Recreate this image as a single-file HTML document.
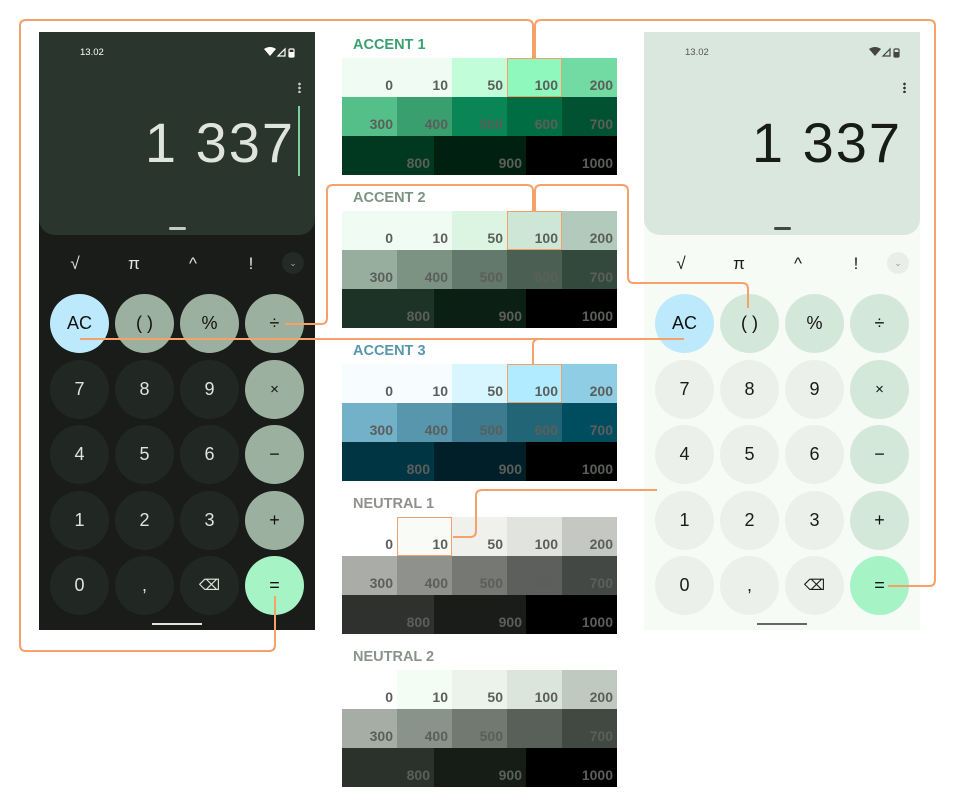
<!DOCTYPE html>
<html><head><meta charset="utf-8"><style>
*{margin:0;padding:0;box-sizing:border-box}
body{width:962px;height:810px;background:#fff;position:relative;overflow:hidden;font-family:"Liberation Sans",sans-serif}
.abs{position:absolute}
.ph{position:absolute;top:32px;width:276px;height:598px;overflow:hidden}
.top{position:absolute;left:0;top:0;width:276px;height:203px;border-radius:0 0 16px 16px}
.st{position:absolute;top:15px;left:41px;font-size:9.5px}
.num{position:absolute;right:18px;top:78px;font-size:56px;letter-spacing:2px;font-weight:300}
.fn{position:absolute;top:222px;font-size:17px;width:30px;text-align:center}
.b{position:absolute;width:59px;height:59px;border-radius:50%;text-align:center;line-height:59px;font-size:18px}
.lbl{position:absolute;left:353px;font-size:14.5px;font-weight:bold}
.g{position:absolute;left:342px;width:275px;height:117px}
.c{position:absolute;height:39px;text-align:right;padding-right:4px;padding-top:19px;font-size:14px;font-weight:bold;color:#5b5e5b}
.hl{outline:1.5px solid #f4a06a;outline-offset:-1.5px}
</style></head><body>

<!-- DARK PHONE -->
<div class="ph" style="left:39px;background:#191c19">
 <div class="top" style="background:#29352d">
  <div class="st" style="color:#fff">13.02</div>
  <svg class="abs" style="left:225px;top:15px" width="34" height="11"><path d="M0 2 Q6 -2 12 2 L6 9Z" fill="#fff"/><path d="M14 9 L21 2 L21 9Z" fill="none" stroke="#fff" stroke-width="1.2"/><rect x="25" y="2" width="5" height="8" rx="1" fill="none" stroke="#fff" stroke-width="1.2"/><rect x="25" y="5" width="5" height="5" fill="#fff"/></svg>
  <div class="abs" style="left:259px;top:50px;width:3px;height:11px;background:radial-gradient(circle,#ccc 1.2px,transparent 1.5px) 0 0/3px 4px"></div>
  <div class="num" style="color:#dfe4dd;right:20px">1 337</div>
  <div class="abs" style="left:259px;top:74px;width:1.5px;height:70px;background:#7dcf9c"></div>
  <div class="abs" style="left:130px;top:195px;width:17px;height:3px;border-radius:2px;background:#c4cbc4"></div>
 </div>
 <div class="fn" style="left:21px;color:#e0e3de">√</div>
 <div class="fn" style="left:80px;color:#e0e3de">π</div>
 <div class="fn" style="left:139px;color:#e0e3de">^</div>
 <div class="fn" style="left:197px;color:#e0e3de">!</div>
 <div class="abs" style="left:243px;top:220px;width:22px;height:22px;border-radius:50%;background:#242a25;color:#9aa;font-size:9px;text-align:center;line-height:22px">⌄</div>
 <div class="b" style="left:11px;top:262px;background:#bde9fc;color:#111">AC</div>
 <div class="b" style="left:76px;top:262px;background:#9cb0a0;color:#111">( )</div>
 <div class="b" style="left:141px;top:262px;background:#9cb0a0;color:#111">%</div>
 <div class="b" style="left:206px;top:262px;background:#9cb0a0;color:#111">÷</div>
 <div class="b" style="left:11px;top:328px;background:#212722;color:#e0e3de">7</div>
 <div class="b" style="left:76px;top:328px;background:#212722;color:#e0e3de">8</div>
 <div class="b" style="left:141px;top:328px;background:#212722;color:#e0e3de">9</div>
 <div class="b" style="left:206px;top:328px;background:#9cb0a0;color:#111;font-size:15px">×</div>
 <div class="b" style="left:11px;top:393px;background:#212722;color:#e0e3de">4</div>
 <div class="b" style="left:76px;top:393px;background:#212722;color:#e0e3de">5</div>
 <div class="b" style="left:141px;top:393px;background:#212722;color:#e0e3de">6</div>
 <div class="b" style="left:206px;top:393px;background:#9cb0a0;color:#111">−</div>
 <div class="b" style="left:11px;top:459px;background:#212722;color:#e0e3de">1</div>
 <div class="b" style="left:76px;top:459px;background:#212722;color:#e0e3de">2</div>
 <div class="b" style="left:141px;top:459px;background:#212722;color:#e0e3de">3</div>
 <div class="b" style="left:206px;top:459px;background:#9cb0a0;color:#111">+</div>
 <div class="b" style="left:11px;top:524px;background:#212722;color:#e0e3de">0</div>
 <div class="b" style="left:76px;top:524px;background:#212722;color:#e0e3de">,</div>
 <div class="b" style="left:141px;top:524px;background:#212722;color:#e0e3de;font-size:15px">⌫</div>
 <div class="b" style="left:206px;top:524px;background:#a6f3c5;color:#111">=</div>
 <div class="abs" style="left:113px;top:591px;width:50px;height:2px;background:#e0e3de"></div>
</div>

<!-- LIGHT PHONE -->
<div class="ph" style="left:644px;background:#f7fbf5">
 <div class="top" style="background:#dae7de">
  <div class="st" style="color:#555">13.02</div>
  <svg class="abs" style="left:225px;top:15px" width="34" height="11"><path d="M0 2 Q6 -2 12 2 L6 9Z" fill="#444"/><path d="M14 9 L21 2 L21 9Z" fill="none" stroke="#444" stroke-width="1.2"/><rect x="25" y="2" width="5" height="8" rx="1" fill="none" stroke="#444" stroke-width="1.2"/><rect x="25" y="5" width="5" height="5" fill="#444"/></svg>
  <div class="abs" style="left:259px;top:50px;width:3px;height:11px;background:radial-gradient(circle,#333 1.2px,transparent 1.5px) 0 0/3px 4px"></div>
  <div class="num" style="color:#181c19">1 337</div>
  <div class="abs" style="left:130px;top:195px;width:17px;height:3px;border-radius:2px;background:#3e4a42"></div>
 </div>
 <div class="fn" style="left:22px;color:#191c19">√</div>
 <div class="fn" style="left:80px;color:#191c19">π</div>
 <div class="fn" style="left:139px;color:#191c19">^</div>
 <div class="fn" style="left:197px;color:#191c19">!</div>
 <div class="abs" style="left:243px;top:220px;width:22px;height:22px;border-radius:50%;background:#e9eee8;color:#999;font-size:9px;text-align:center;line-height:22px">⌄</div>
 <div class="b" style="left:11px;top:262px;background:#bde9fc;color:#111">AC</div>
 <div class="b" style="left:76px;top:262px;background:#d4e8d9;color:#111">( )</div>
 <div class="b" style="left:141px;top:262px;background:#d4e8d9;color:#111">%</div>
 <div class="b" style="left:206px;top:262px;background:#d4e8d9;color:#111">÷</div>
 <div class="b" style="left:11px;top:328px;background:#ebf1ea;color:#191c19">7</div>
 <div class="b" style="left:76px;top:328px;background:#ebf1ea;color:#191c19">8</div>
 <div class="b" style="left:141px;top:328px;background:#ebf1ea;color:#191c19">9</div>
 <div class="b" style="left:206px;top:328px;background:#d4e8d9;color:#111;font-size:15px">×</div>
 <div class="b" style="left:11px;top:393px;background:#ebf1ea;color:#191c19">4</div>
 <div class="b" style="left:76px;top:393px;background:#ebf1ea;color:#191c19">5</div>
 <div class="b" style="left:141px;top:393px;background:#ebf1ea;color:#191c19">6</div>
 <div class="b" style="left:206px;top:393px;background:#d4e8d9;color:#111">−</div>
 <div class="b" style="left:11px;top:459px;background:#ebf1ea;color:#191c19">1</div>
 <div class="b" style="left:76px;top:459px;background:#ebf1ea;color:#191c19">2</div>
 <div class="b" style="left:141px;top:459px;background:#ebf1ea;color:#191c19">3</div>
 <div class="b" style="left:206px;top:459px;background:#d4e8d9;color:#111">+</div>
 <div class="b" style="left:11px;top:524px;background:#ebf1ea;color:#191c19">0</div>
 <div class="b" style="left:76px;top:524px;background:#ebf1ea;color:#191c19">,</div>
 <div class="b" style="left:141px;top:524px;background:#ebf1ea;color:#191c19;font-size:15px">⌫</div>
 <div class="b" style="left:206px;top:524px;background:#a6f3c5;color:#111">=</div>
 <div class="abs" style="left:113px;top:591px;width:50px;height:2px;background:#666"></div>
</div>

<!-- PALETTES -->
<div class="lbl" style="top:37px;color:#3aa06f">ACCENT 1</div>
<div class="g" style="top:58px">
 <div class="c" style="left:0;top:0;width:55px;background:#f0fcf3">0</div>
 <div class="c" style="left:55px;top:0;width:55px;background:#f0fcf3">10</div>
 <div class="c" style="left:110px;top:0;width:55px;background:#c0fdd8">50</div>
 <div class="c hl" style="left:165px;top:0;width:55px;background:#8ff8bd">100</div>
 <div class="c" style="left:220px;top:0;width:55px;background:#72dba3">200</div>
 <div class="c" style="left:0;top:39px;width:55px;background:#55bf89">300</div>
 <div class="c" style="left:55px;top:39px;width:55px;background:#3a9f6f">400</div>
 <div class="c" style="left:110px;top:39px;width:55px;background:#098556">500</div>
 <div class="c" style="left:165px;top:39px;width:55px;background:#006d43">600</div>
 <div class="c" style="left:220px;top:39px;width:55px;background:#005232">700</div>
 <div class="c" style="left:0;top:78px;width:92px;background:#003920">800</div>
 <div class="c" style="left:92px;top:78px;width:92px;background:#002112">900</div>
 <div class="c" style="left:184px;top:78px;width:91px;background:#000">1000</div>
</div>

<div class="lbl" style="top:190px;color:#7c9384">ACCENT 2</div>
<div class="g" style="top:211px">
 <div class="c" style="left:0;top:0;width:55px;background:#f0fcf3">0</div>
 <div class="c" style="left:55px;top:0;width:55px;background:#f0fcf3">10</div>
 <div class="c" style="left:110px;top:0;width:55px;background:#dcf5e3">50</div>
 <div class="c hl" style="left:165px;top:0;width:55px;background:#cde6d5">100</div>
 <div class="c" style="left:220px;top:0;width:55px;background:#b1cabb">200</div>
 <div class="c" style="left:0;top:39px;width:55px;background:#97ae9f">300</div>
 <div class="c" style="left:55px;top:39px;width:55px;background:#7c9384">400</div>
 <div class="c" style="left:110px;top:39px;width:55px;background:#62796b">500</div>
 <div class="c" style="left:165px;top:39px;width:55px;background:#4b6053">600</div>
 <div class="c" style="left:220px;top:39px;width:55px;background:#33493d">700</div>
 <div class="c" style="left:0;top:78px;width:92px;background:#1d3327">800</div>
 <div class="c" style="left:92px;top:78px;width:92px;background:#0c1f14">900</div>
 <div class="c" style="left:184px;top:78px;width:91px;background:#000">1000</div>
</div>

<div class="lbl" style="top:343px;color:#5796ad">ACCENT 3</div>
<div class="g" style="top:364px">
 <div class="c" style="left:0;top:0;width:55px;background:#f7fdff">0</div>
 <div class="c" style="left:55px;top:0;width:55px;background:#f7fdff">10</div>
 <div class="c" style="left:110px;top:0;width:55px;background:#d7f6ff">50</div>
 <div class="c hl" style="left:165px;top:0;width:55px;background:#b0ebff">100</div>
 <div class="c" style="left:220px;top:0;width:55px;background:#8fcde5">200</div>
 <div class="c" style="left:0;top:39px;width:55px;background:#73b1c9">300</div>
 <div class="c" style="left:55px;top:39px;width:55px;background:#5796ad">400</div>
 <div class="c" style="left:110px;top:39px;width:55px;background:#3d7b91">500</div>
 <div class="c" style="left:165px;top:39px;width:55px;background:#216577">600</div>
 <div class="c" style="left:220px;top:39px;width:55px;background:#004d5f">700</div>
 <div class="c" style="left:0;top:78px;width:92px;background:#003543">800</div>
 <div class="c" style="left:92px;top:78px;width:92px;background:#001f28">900</div>
 <div class="c" style="left:184px;top:78px;width:91px;background:#000">1000</div>
</div>

<div class="lbl" style="top:496px;color:#8f918c">NEUTRAL 1</div>
<div class="g" style="top:517px">
 <div class="c" style="left:0;top:0;width:55px;background:#fff">0</div>
 <div class="c hl" style="left:55px;top:0;width:55px;background:#f9fcf6">10</div>
 <div class="c" style="left:110px;top:0;width:55px;background:#f0f1ec">50</div>
 <div class="c" style="left:165px;top:0;width:55px;background:#e1e3de">100</div>
 <div class="c" style="left:220px;top:0;width:55px;background:#c5c7c2">200</div>
 <div class="c" style="left:0;top:39px;width:55px;background:#a9aca7">300</div>
 <div class="c" style="left:55px;top:39px;width:55px;background:#8f918c">400</div>
 <div class="c" style="left:110px;top:39px;width:55px;background:#757873">500</div>
 <div class="c" style="left:165px;top:39px;width:55px;background:#5c5f5b">600</div>
 <div class="c" style="left:220px;top:39px;width:55px;background:#444844">700</div>
 <div class="c" style="left:0;top:78px;width:92px;background:#2e312e">800</div>
 <div class="c" style="left:92px;top:78px;width:92px;background:#191c19">900</div>
 <div class="c" style="left:184px;top:78px;width:91px;background:#000">1000</div>
</div>

<div class="lbl" style="top:649px;color:#8a938b">NEUTRAL 2</div>
<div class="g" style="top:670px">
 <div class="c" style="left:0;top:0;width:55px;background:#fff">0</div>
 <div class="c" style="left:55px;top:0;width:55px;background:#f3fdf3">10</div>
 <div class="c" style="left:110px;top:0;width:55px;background:#ebf3eb">50</div>
 <div class="c" style="left:165px;top:0;width:55px;background:#dce5dc">100</div>
 <div class="c" style="left:220px;top:0;width:55px;background:#c0c9c0">200</div>
 <div class="c" style="left:0;top:39px;width:55px;background:#a5ada5">300</div>
 <div class="c" style="left:55px;top:39px;width:55px;background:#8a938b">400</div>
 <div class="c" style="left:110px;top:39px;width:55px;background:#717971">500</div>
 <div class="c" style="left:165px;top:39px;width:55px;background:#586059">600</div>
 <div class="c" style="left:220px;top:39px;width:55px;background:#414942">700</div>
 <div class="c" style="left:0;top:78px;width:92px;background:#2b322c">800</div>
 <div class="c" style="left:92px;top:78px;width:92px;background:#161d17">900</div>
 <div class="c" style="left:184px;top:78px;width:91px;background:#000">1000</div>
</div>

<!-- CONNECTOR LINES -->
<svg class="abs" style="left:0;top:0" width="962" height="810" fill="none" stroke="#f6a06a" stroke-width="2" stroke-linejoin="round">
 <path d="M275 596 V645 Q275 651 269 651 H26 Q20 651 20 645 V26 Q20 20 26 20 H527 Q533 20 533 26 V58"/>
 <path d="M888 586 H929 Q935 586 935 580 V26 Q935 20 929 20 H541 Q535 20 535 26 V58"/>
 <path d="M285 324 H321 Q327 324 327 318 V191 Q327 185 333 185 H527 Q533 185 533 191 V211"/>
 <path d="M535 211 V191 Q535 185 541 185 H622 Q628 185 628 191 V277 Q628 283 634 283 H742 Q748 283 748 289 V308"/>
 <path d="M80 339 H684"/>
 <path d="M533 364 V345 Q533 339 539 339"/>
 <path d="M453 537 H470 Q476 537 476 531 V496 Q476 490 482 490 H657"/>
</svg>
</body></html>
